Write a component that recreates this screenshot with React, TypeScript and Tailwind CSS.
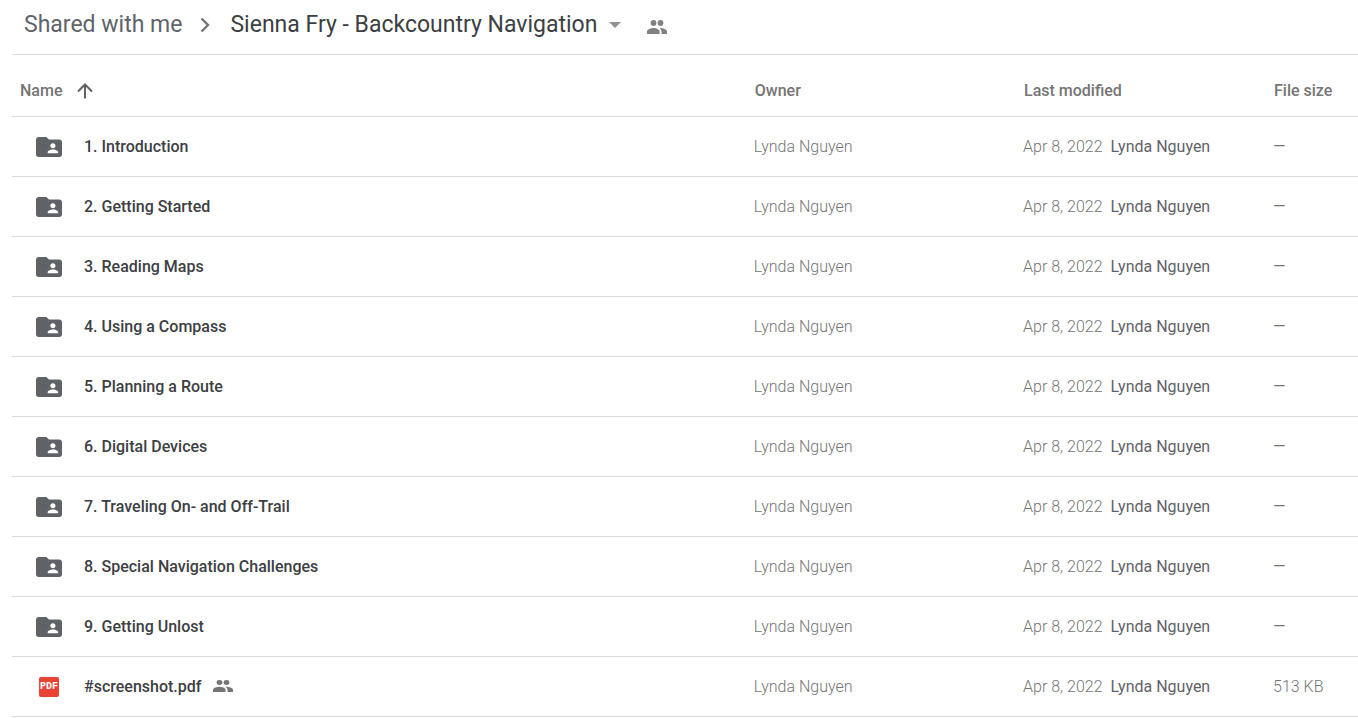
import React from "react";

type Item = { name: string; kind: "folder" | "pdf"; size: string };

const items: Item[] = [
  { name: "1. Introduction", kind: "folder", size: "—" },
  { name: "2. Getting Started", kind: "folder", size: "—" },
  { name: "3. Reading Maps", kind: "folder", size: "—" },
  { name: "4. Using a Compass", kind: "folder", size: "—" },
  { name: "5. Planning a Route", kind: "folder", size: "—" },
  { name: "6. Digital Devices", kind: "folder", size: "—" },
  { name: "7. Traveling On- and Off-Trail", kind: "folder", size: "—" },
  { name: "8. Special Navigation Challenges", kind: "folder", size: "—" },
  { name: "9. Getting Unlost", kind: "folder", size: "—" },
  { name: "#screenshot.pdf", kind: "pdf", size: "513 KB" },
];

function PeopleIcon({ className }: { className: string }) {
  return (
    <svg viewBox="2 5 20 14" preserveAspectRatio="none" className={className} fill="currentColor" aria-hidden="true">
      <circle cx="8.5" cy="8" r="2.9" />
      <circle cx="15.5" cy="8" r="2.9" />
      <path d="M8.5 13C6.2 13 2 14.2 2 16.5V19h12.6v-2.5C14.6 14.2 10.8 13 8.5 13z" />
      <path d="M15.5 13c-.3 0-.6 0-1 .05 1.2.85 2 1.95 2 3.45V19H22v-2.5c0-2.3-4.2-3.5-6.5-3.5z" />
    </svg>
  );
}

function SharedFolderIcon() {
  return (
    <svg viewBox="2 4 20 16" preserveAspectRatio="none" className="h-5 w-[26px] text-[#5f6368]" fill="currentColor" aria-hidden="true">
      <path d="M20 6h-8l-2-2H4c-1.1 0-1.99.9-1.99 2L2 18c0 1.1.9 2 2 2h16c1.1 0 2-.9 2-2V8c0-1.1-.9-2-2-2zm-5 3c1.1 0 2 .9 2 2s-.9 2-2 2-2-.9-2-2 .9-2 2-2zm4 8h-8v-1c0-1.33 2.67-2 4-2s4 .67 4 2v1z" />
    </svg>
  );
}

function PdfIcon() {
  return (
    <span className="flex size-5 items-center justify-center rounded-xs bg-[#ea4335] font-['Liberation_Mono',monospace] text-[10px] leading-none font-bold text-white" aria-hidden="true">
      PDF
    </span>
  );
}

export default function App() {
  return (
    <main className="bg-white pl-3 font-[Roboto,sans-serif] text-base text-[#757575]">
      <nav aria-label="Breadcrumb" className="flex h-[55px] items-center border-b border-[#dadce0] pb-1 pl-3 font-['Google_Sans','Product_Sans',Roboto,sans-serif] text-[23px] leading-7">
        <a href="#shared" className="text-[#5f6368]">Shared with me</a>
        <svg viewBox="0 0 10 16" className="mr-5 ml-[18px] h-4 w-2.5" fill="none" stroke="#757575" strokeWidth="2.4" aria-hidden="true">
          <path d="M1.5 1.5 8 8l-6.5 6.5" />
        </svg>
        <button type="button" className="flex items-center text-[#3c4043]">
          Sienna Fry - Backcountry Navigation
          <svg viewBox="0 0 12 6" className="ml-3 h-1.5 w-3" fill="#919191" aria-hidden="true">
            <path d="M0 0h12L6 6z" />
          </svg>
        </button>
        <button type="button" aria-label="Manage people" className="mt-1 ml-[26px] text-[#808184]">
          <PeopleIcon className="h-3.5 w-5" />
        </button>
      </nav>
      <table className="w-full table-fixed border-separate border-spacing-0 text-left">
        <colgroup>
          <col />
          <col className="w-[20%]" />
          <col className="w-[250px]" />
          <col className="w-[85px]" />
        </colgroup>
        <thead>
          <tr className="h-[62px] *:border-b *:border-[#dadce0] *:p-0 *:pt-2.5 *:font-medium">
            <th scope="col" aria-sort="ascending">
              <button type="button" className="flex items-center pl-2">
                Name
                <svg viewBox="0 0 16 16" className="ml-[15px] size-4" fill="none" stroke="#616161" strokeWidth="2" aria-hidden="true">
                  <path d="M8 15.5V2M1 8.5 8 1.5l7 7" />
                </svg>
              </button>
            </th>
            <th scope="col"><span className="pl-px">Owner</span></th>
            <th scope="col"><span className="pl-px">Last modified</span></th>
            <th scope="col"><span className="pl-px">File size</span></th>
          </tr>
        </thead>
        <tbody>
          {items.map((item) => (
            <tr key={item.name} className="h-[60px] *:border-b *:border-[#dadce0] *:p-0">
              <td>
                <div className="flex items-center pl-6">
                  <span className="mr-[22px] flex w-[26px] justify-center">
                    {item.kind === "folder" ? <SharedFolderIcon /> : <PdfIcon />}
                  </span>
                  <a href="#item" className="font-medium text-[#3c4043]">{item.name}</a>
                  {item.kind === "pdf" && <PeopleIcon className="mb-0.5 ml-3 h-3 w-5 text-[#757575]" />}
                </div>
              </td>
              <td className="font-light">Lynda Nguyen</td>
              <td className="font-light">
                Apr 8, 2022
                <span className="ml-2 font-normal text-[#5f6368]">Lynda Nguyen</span>
              </td>
              <td className={item.kind === "folder" ? "font-normal" : "font-light"}>{item.size}</td>
            </tr>
          ))}
        </tbody>
      </table>
    </main>
  );
}
